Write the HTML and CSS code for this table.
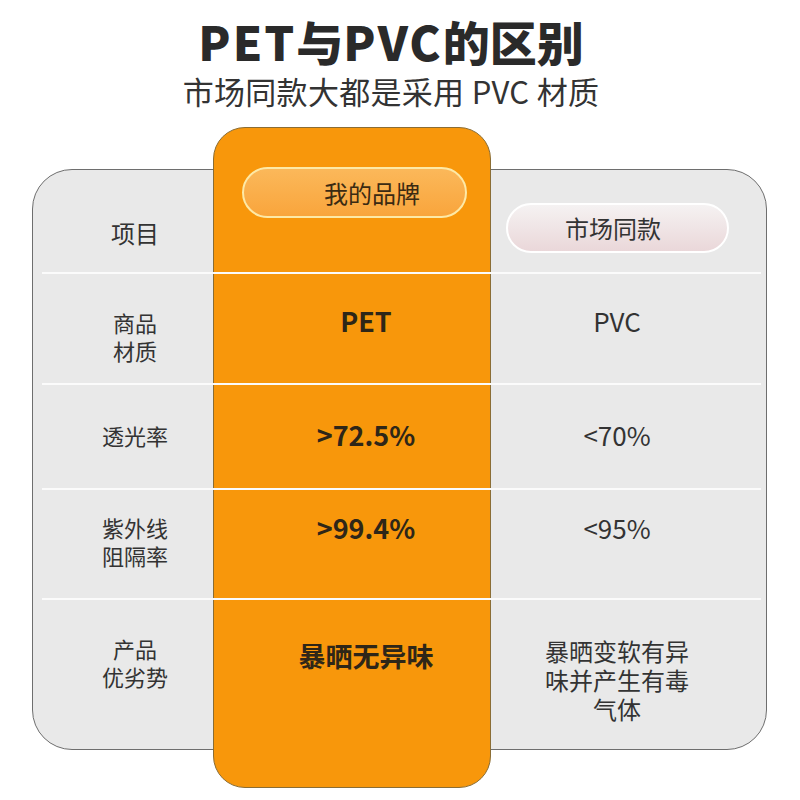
FILE: index.html
```html
<!DOCTYPE html>
<html lang="zh-CN">
<head>
<meta charset="utf-8">
<title>PET与PVC的区别</title>
<link rel="stylesheet" href="styles.css">
</head>
<body>
<div class="page">
  <header class="head">
    <h1 class="title"><span class="latin">PET</span>与<span class="latin">PVC</span>的区别</h1>
    <p class="subtitle">市场同款大都是采用 PVC 材质</p>
  </header>
  <div class="compare">
    <div class="card"></div>
    <div class="brand-col"></div>
    <div class="rule rule-1"></div>
    <div class="rule rule-2"></div>
    <div class="rule rule-3"></div>
    <div class="rule rule-4"></div>

    <div class="cell label head-row">项目</div>
    <div class="cell mine head-row"><div class="pill pill-mine">我的品牌</div></div>
    <div class="cell theirs head-row"><div class="pill pill-theirs">市场同款</div></div>

    <div class="cell label row-1">商品<br>材质</div>
    <div class="cell mine row-1">PET</div>
    <div class="cell theirs row-1">PVC</div>

    <div class="cell label row-2">透光率</div>
    <div class="cell mine row-2">&gt;72.5%</div>
    <div class="cell theirs row-2">&lt;70%</div>

    <div class="cell label row-3">紫外线<br>阻隔率</div>
    <div class="cell mine row-3">&gt;99.4%</div>
    <div class="cell theirs row-3">&lt;95%</div>

    <div class="cell label row-4">产品<br>优劣势</div>
    <div class="cell mine row-4">暴晒无异味</div>
    <div class="cell theirs row-4 multi">暴晒变软有异<br>味并产生有毒<br>气体</div>
  </div>
</div>
</body>
</html>
```

FILE: styles.css
```css
html, body {
  margin: 0;
  padding: 0;
  background: #ffffff;
}

body {
  font-family: "Noto Sans CJK SC", "Noto Sans", sans-serif;
  color: #333333;
}

.page {
  width: 800px;
  height: 800px;
  overflow: hidden;
}

.head {
  height: 127px;
  box-sizing: border-box;
  padding: 14px 18px 0 0;
  text-align: center;
}

.title {
  margin: 0;
  font-size: 47px;
  line-height: 54px;
  font-weight: 900;
  color: #2a2a2a;
}

.title .latin {
  letter-spacing: 2px;
}

.subtitle {
  margin: 1px 0 0;
  font-size: 31px;
  line-height: 44px;
  letter-spacing: 0.3px;
  font-weight: 400;
  color: #333333;
}

.compare {
  display: grid;
  grid-template-columns: 181px 278px 276px;
  grid-template-rows: 42px 103px 2px 109px 2px 103px 2px 108px 2px 150px 38px;
  width: 735px;
  margin-left: 32px;
}

.card {
  grid-column: 1 / -1;
  grid-row: 2 / 11;
  background: #e9e9e9;
  border: 1px solid #6e6e6e;
  border-radius: 40px;
}

.brand-col {
  grid-column: 2;
  grid-row: 1 / -1;
  background: #f8970b;
  border: 1px solid #8a6d35;
  border-radius: 32px;
}

.rule {
  grid-column: 1 / -1;
  margin: 0 6px 0 10px;
  background: #fbfbfb;
}
.rule-1 { grid-row: 3; }
.rule-2 { grid-row: 5; }
.rule-3 { grid-row: 7; }
.rule-4 { grid-row: 9; }

.cell {
  text-align: center;
}

.label {
  grid-column: 1;
  padding-left: 25px;
  font-size: 22px;
  line-height: 28px;
  color: #333333;
}

.mine {
  grid-column: 2;
  padding-left: 28px;
  font-size: 27px;
  line-height: 32px;
  font-weight: 700;
  color: #2e2618;
}

.theirs {
  grid-column: 3;
  padding-right: 24px;
  font-size: 26px;
  line-height: 32px;
  color: #333333;
}

/* header row */
.label.head-row {
  grid-row: 2;
  padding-top: 49px;
  font-size: 24px;
  line-height: 30px;
}

.mine.head-row {
  grid-row: 1 / 3;
  padding: 40px 0 0 29px;
  text-align: left;
}

.theirs.head-row {
  grid-row: 2;
  padding: 34px 0 0 15px;
  text-align: left;
}

.pill {
  box-sizing: border-box;
  display: flex;
  align-items: center;
  justify-content: center;
  border-radius: 26px;
  border: 2px solid;
  font-size: 24px;
  font-weight: 400;
  color: #333333;
}

.pill-mine {
  width: 225px;
  height: 51px;
  padding-left: 35px;
  background: linear-gradient(#fbb85a, #f9a53c);
  border-color: #fde9a6;
  color: #3b2a12;
}

.pill-theirs {
  width: 223px;
  height: 50px;
  padding-right: 9px;
  background: linear-gradient(#f5f2f2, #ead7d9);
  border-color: #ffffff;
}

/* body rows */
.row-1 { grid-row: 4; }
.row-2 { grid-row: 6; }
.row-3 { grid-row: 8; }
.row-4 { grid-row: 10; }

.label.row-1 { padding-top: 34px; }
.label.row-2 { padding-top: 36px; }
.label.row-3 { padding-top: 23px; }
.label.row-4 { padding-top: 34px; }

.mine.row-1, .theirs.row-1 { padding-top: 31px; }
.mine.row-2, .theirs.row-2 { padding-top: 34px; }
.mine.row-3, .theirs.row-3 { padding-top: 22px; }
.mine.row-4 { padding-top: 40px; }

.theirs.multi {
  padding-top: 36px;
  font-size: 24px;
  line-height: 29px;
}
```
